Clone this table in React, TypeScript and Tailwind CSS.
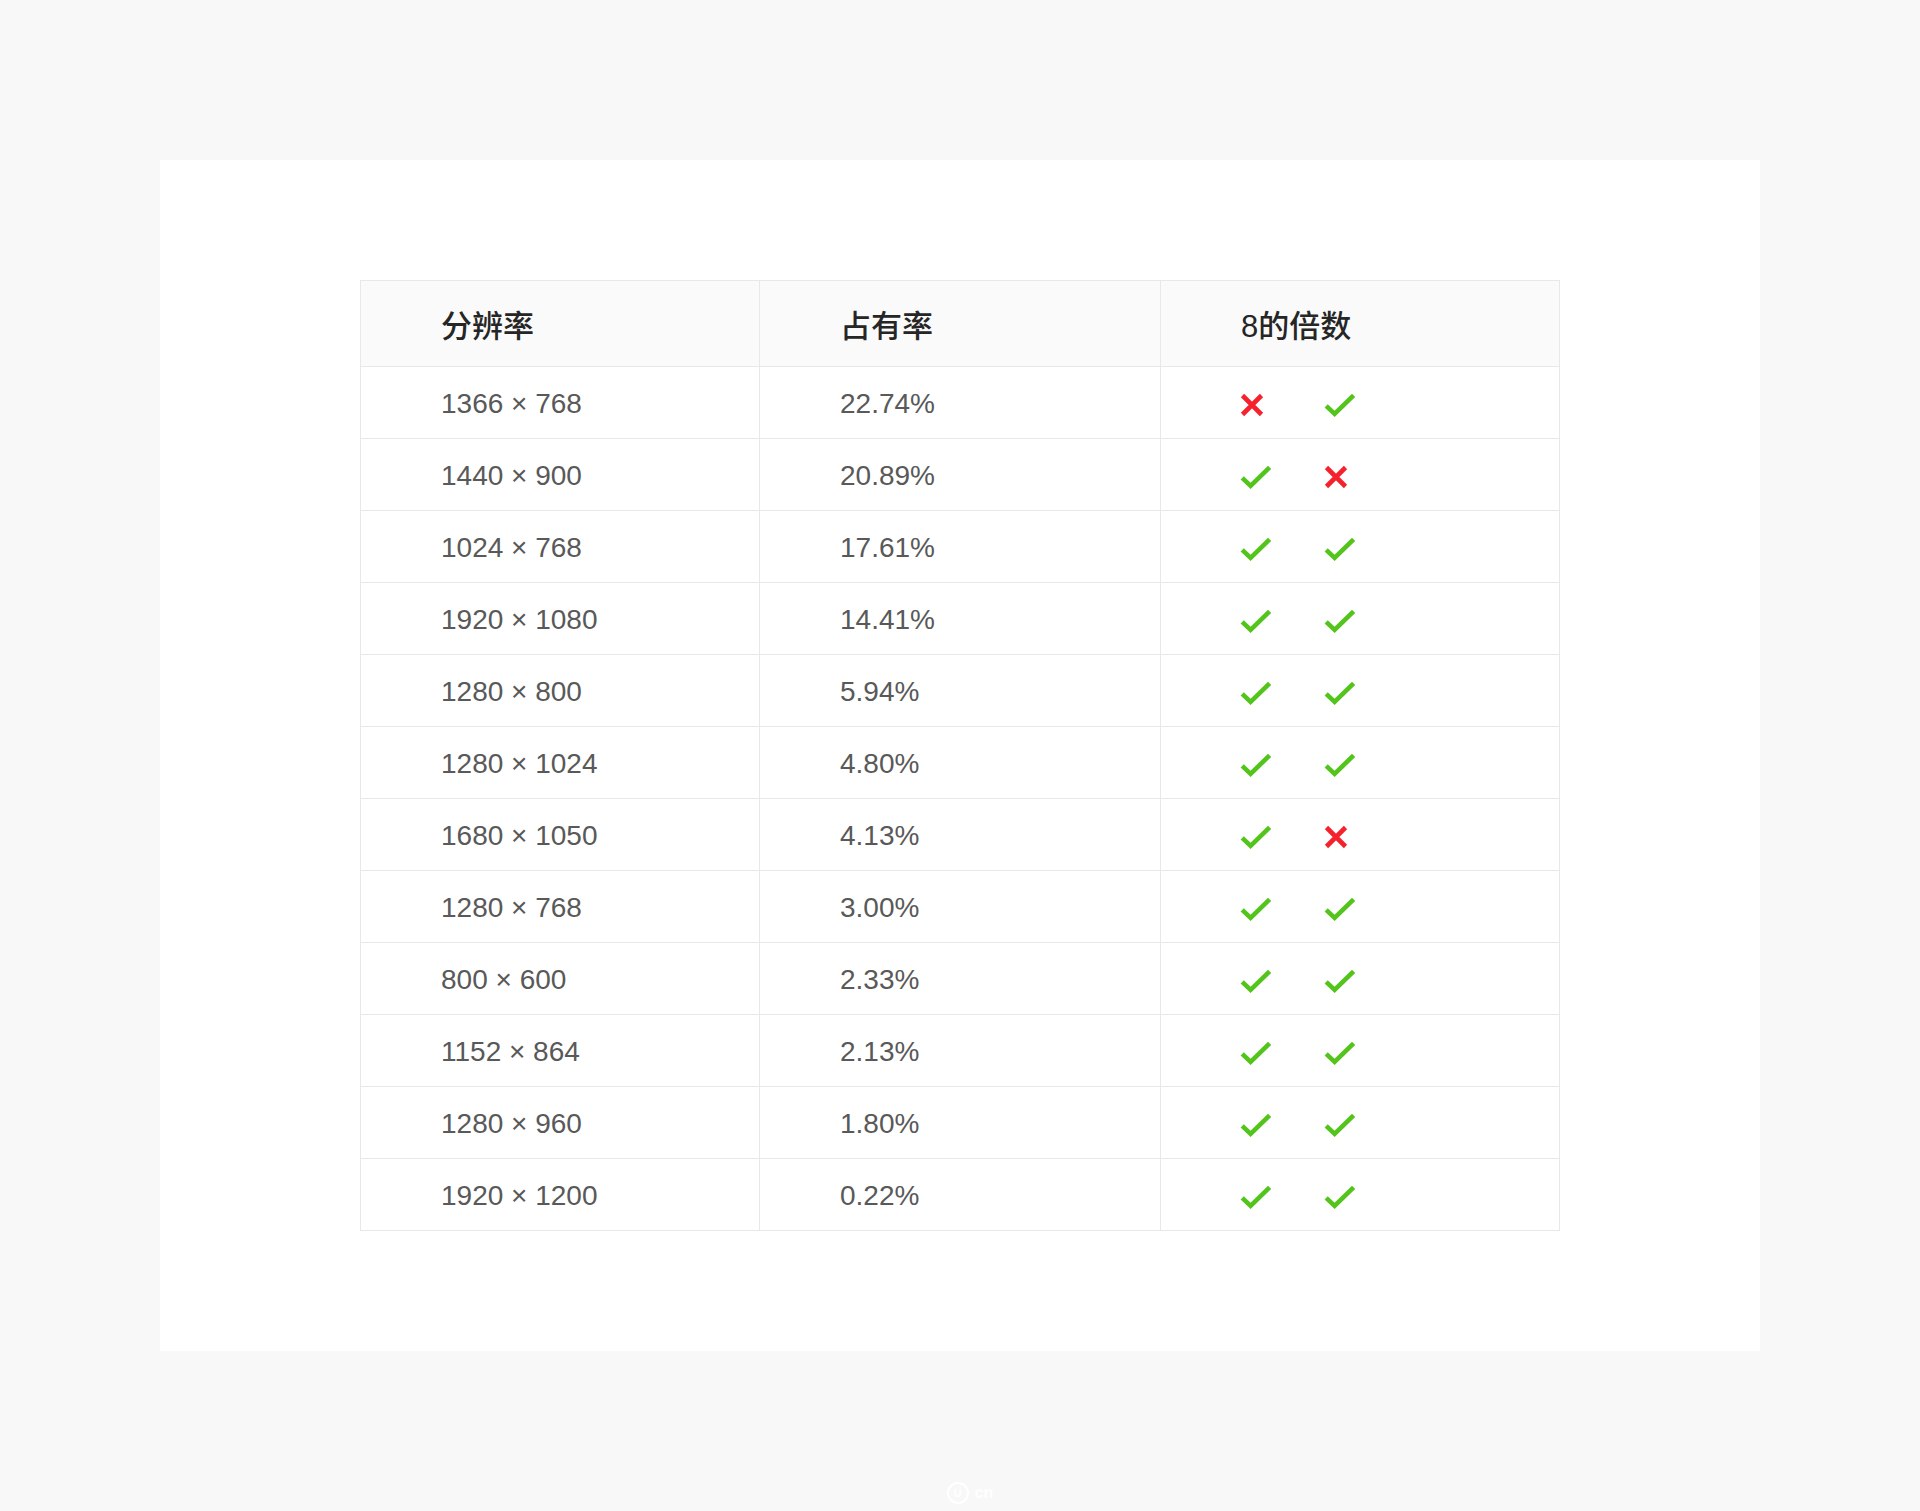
import React from "react";

const rows: [string, string, boolean, boolean][] = [
  ["1366 × 768", "22.74%", false, true],
  ["1440 × 900", "20.89%", true, false],
  ["1024 × 768", "17.61%", true, true],
  ["1920 × 1080", "14.41%", true, true],
  ["1280 × 800", "5.94%", true, true],
  ["1280 × 1024", "4.80%", true, true],
  ["1680 × 1050", "4.13%", true, false],
  ["1280 × 768", "3.00%", true, true],
  ["800 × 600", "2.33%", true, true],
  ["1152 × 864", "2.13%", true, true],
  ["1280 × 960", "1.80%", true, true],
  ["1920 × 1200", "0.22%", true, true],
];

function Check() {
  return (
    <svg width="32" height="24" viewBox="0 0 32 24" className="block">
      <polyline
        points="2.2,12.8 10.6,20.8 29.6,2.4"
        fill="none"
        stroke="#52c41a"
        strokeWidth="4.6"
        strokeLinecap="butt"
        strokeLinejoin="miter"
      />
    </svg>
  );
}

function Cross() {
  return (
    <svg width="24" height="24" viewBox="0 0 24 24" className="block">
      <path
        d="M2.5 2.5 L21.5 21.5 M21.5 2.5 L2.5 21.5"
        fill="none"
        stroke="#f5222d"
        strokeWidth="4.6"
        strokeLinecap="butt"
      />
    </svg>
  );
}

const font = { fontFamily: '"Liberation Sans", "Noto Sans CJK SC", sans-serif' };

export default function App() {
  return (
    <div className="min-h-[1511px] w-full bg-[#f8f8f8] flex flex-col items-center" style={font}>
      <div className="mt-[160px] w-[1600px] bg-white px-[200px] py-[120px]">
        <div className="w-[1200px] border border-[#e8e8e8]">
          <div className="grid grid-cols-[399px_401px_1fr] h-[86px] bg-[#fafafa] border-b border-[#e8e8e8] text-[31px] font-medium text-[#262626]">
            <div className="border-r border-[#e8e8e8] pl-20 flex items-center pt-[8px]">分辨率</div>
            <div className="border-r border-[#e8e8e8] pl-20 flex items-center pt-[8px]">占有率</div>
            <div className="pl-20 flex items-center pt-[8px]">8的倍数</div>
          </div>
          {rows.map((r, i) => (
            <div
              key={i}
              className={
                "grid grid-cols-[399px_401px_1fr] text-[28px] text-[#595959] " +
                (i < rows.length - 1 ? "h-[72px] border-b border-[#e8e8e8]" : "h-[71px]")
              }
            >
              <div className="border-r border-[#e8e8e8] pl-20 flex items-center pt-[3px]">{r[0]}</div>
              <div className="border-r border-[#e8e8e8] pl-20 flex items-center pt-[3px]">{r[1]}</div>
              <div className="pl-[79px] flex items-center">
                <div className="w-[84px] flex items-center pt-[5px]">{r[2] ? <Check /> : <Cross />}</div>
                <div className="w-[84px] flex items-center pt-[5px]">{r[3] ? <Check /> : <Cross />}</div>
              </div>
            </div>
          ))}
        </div>
      </div>
      <div className="h-[160px] w-full flex items-end justify-center pb-[6px]">
        <div className="flex items-center gap-[6px] ml-[20px] text-white">
          <div className="w-[22px] h-[22px] rounded-full border-2 border-white flex items-center justify-center text-[11px] font-bold">U</div>
          <span className="text-[16px] font-bold">cn</span>
        </div>
      </div>
    </div>
  );
}
